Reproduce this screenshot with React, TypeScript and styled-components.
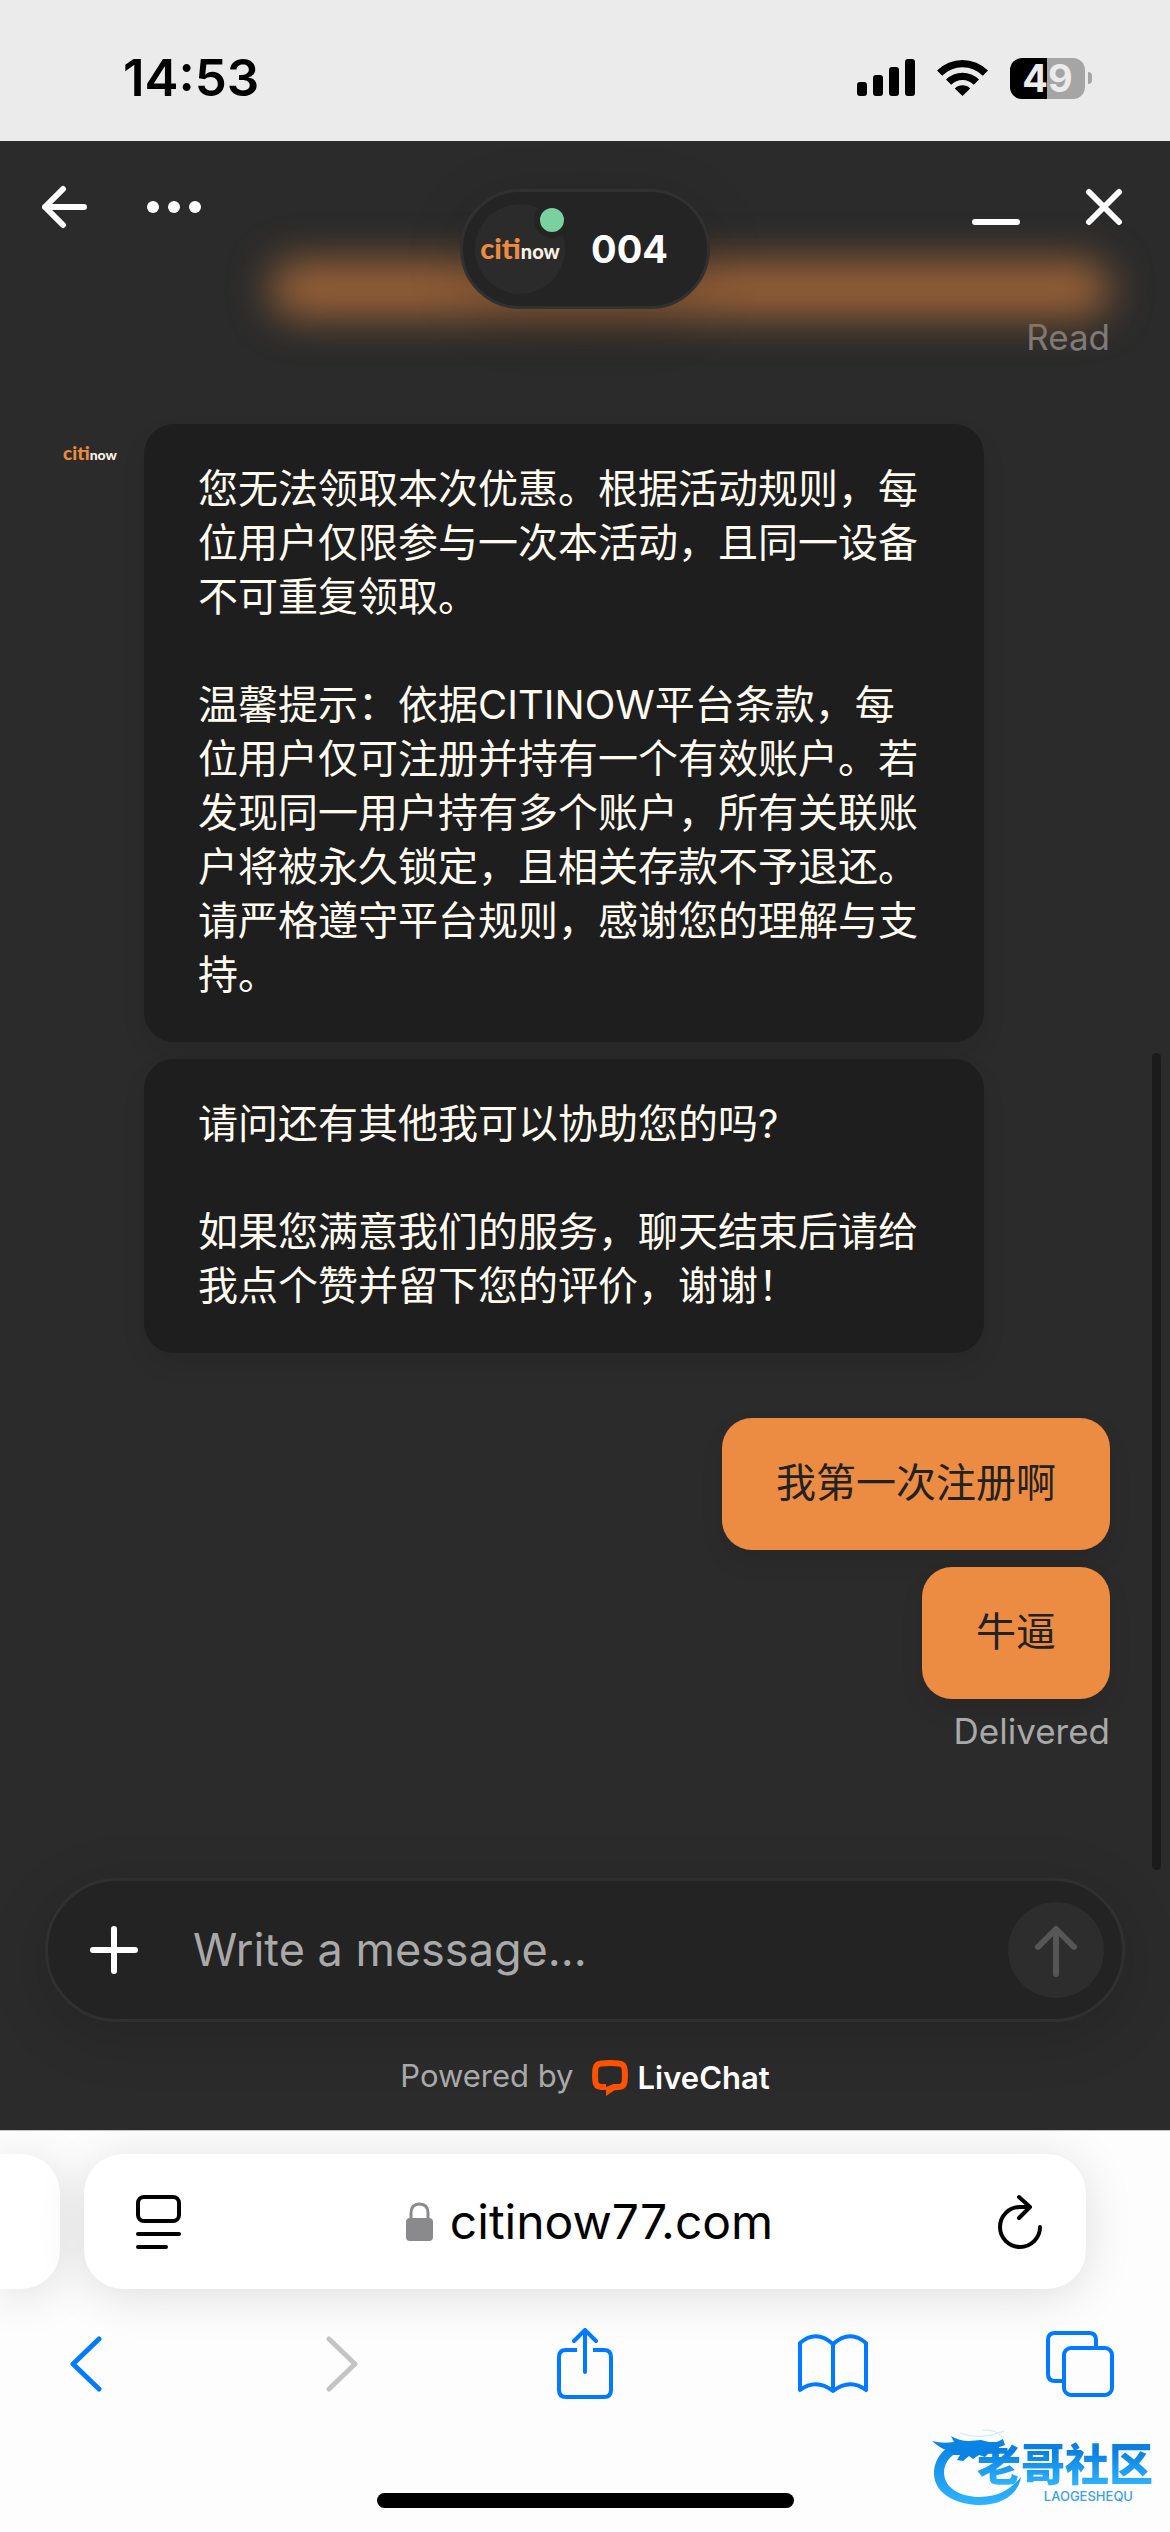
import React, { useState } from "react";
import styled, { createGlobalStyle } from "styled-components";

const latin = `Inter, "Noto Sans CJK SC", sans-serif`;

const GlobalStyle = createGlobalStyle`
  *, *::before, *::after { box-sizing: border-box; }
  body { margin: 0; background: #fdfdfd; font-family: ${latin}; }
  button, input { font: inherit; color: inherit; }
  button { border: 0; padding: 0; background: none; cursor: pointer; }
  svg { display: block; }
`;

const Page = styled.div`
  display: flex;
  flex-direction: column;
  min-height: 100vh;
`;

/* Status bar */

const StatusBar = styled.header`
  display: flex;
  justify-content: space-between;
  align-items: center;
  padding: 48px 78px 33px 123px;
  background: #ebebeb;
  color: #000;
`;

const Clock = styled.time`
  font-size: 51px;
  line-height: 60px;
  font-weight: 600;
`;

const StatusIcons = styled.div`
  display: flex;
  align-items: center;
  gap: 22px;
`;

const Battery = styled.div`
  display: flex;
  align-items: center;
  gap: 3px;
`;

const BatteryBody = styled.div`
  width: 75px;
  border-radius: 12px;
  background: linear-gradient(90deg, #000 49%, #a5a5a5 49%);
  color: #ebebeb;
  font-size: 38px;
  line-height: 41px;
  font-weight: 700;
  text-align: center;
`;

const BatteryCap = styled.div`
  width: 4px;
  height: 12px;
  border-radius: 0 6px 6px 0;
  background: #a5a5a5;
`;

/* Chat */

const Chat = styled.main`
  position: relative;
  flex: 1;
  display: flex;
  flex-direction: column;
  background: #2b2b2b;
`;

const ChatHeader = styled.div`
  position: relative;
  display: grid;
  grid-template-columns: 1fr auto 1fr;
  padding: 36px 36px 0;
  color: #fff;
`;

const HeaderActions = styled.div<{ $end?: boolean }>`
  position: relative;
  display: flex;
  align-items: center;
  align-self: start;
  gap: 48px;
  justify-content: ${(p) => (p.$end ? "flex-end" : "flex-start")};
`;

const IconButton = styled.button`
  display: grid;
  place-items: center;
  width: 60px;
  height: 60px;
`;

const ScrolledBubble = styled.div`
  position: absolute;
  top: 120px;
  left: 270px;
  right: 60px;
  height: 56px;
  border-radius: 28px;
  background: #9a6238;
  filter: blur(20px);
`;

const AgentPill = styled.button`
  position: relative;
  display: flex;
  align-items: center;
  gap: 26px;
  margin-top: 12px;
  padding: 12px 39px 12px 12px;
  border: 3px solid #313131;
  border-radius: 60px;
  background: #242424;
  box-shadow: 0 12px 60px rgba(0, 0, 0, 0.15);
`;

const Avatar = styled.span<{ $large?: boolean }>`
  position: relative;
  display: flex;
  align-items: center;
  justify-content: center;
  flex: none;
  width: ${(p) => (p.$large ? "90px" : "60px")};
  height: ${(p) => (p.$large ? "90px" : "60px")};
  border-radius: 50%;
  background: #2b2b2b;
`;

const BrandMark = styled.span<{ $large?: boolean }>`
  display: flex;
  align-items: baseline;
  font-family: Lato, sans-serif;
  font-weight: 900;
  line-height: 30px;
  color: #ee8b41;
  font-size: ${(p) => (p.$large ? "29px" : "19px")};

  span {
    color: #f8f1e4;
    font-size: ${(p) => (p.$large ? "20px" : "14px")};
  }
`;

const OnlineDot = styled.span`
  position: absolute;
  top: -2px;
  right: -5px;
  width: 36px;
  height: 36px;
  border: 6px solid #242424;
  border-radius: 50%;
  background: #7ad09f;
`;

const AgentName = styled.span`
  font-size: 38px;
  line-height: 48px;
  font-weight: 700;
`;

const Receipt = styled.p<{ $dim?: boolean }>`
  margin: 0;
  font-size: 35px;
  line-height: 40px;
  text-align: right;
  color: ${(p) => (p.$dim ? "#7d7d7d" : "#a9a9a9")};
`;

const Messages = styled.section`
  flex: 1;
  display: flex;
  flex-direction: column;
  padding: 8px 60px 0;
`;

const AgentTurn = styled.div`
  display: flex;
  align-items: flex-start;
  gap: 24px;
  margin-top: 67px;
`;

const Stack = styled.div<{ $mine?: boolean }>`
  display: flex;
  flex-direction: column;
  gap: 17px;
  align-items: ${(p) => (p.$mine ? "flex-end" : "stretch")};
  max-width: ${(p) => (p.$mine ? "none" : "840px")};
  margin: ${(p) => (p.$mine ? "65px 0 12px" : "0")};
`;

const Bubble = styled.p<{ $mine?: boolean }>`
  margin: 0;
  padding: 38px 54px 40px;
  border-radius: 30px;
  background: ${(p) => (p.$mine ? "#ec8b42" : "#1e1e1e")};
  color: ${(p) => (p.$mine ? "#222" : "#fffbf0")};
  font-size: 40px;
  line-height: 54px;
  white-space: pre-line;
  box-shadow: 0 12px 24px rgba(0, 0, 0, 0.08);
`;

const ScrollThumb = styled.div`
  position: absolute;
  top: 912px;
  bottom: 260px;
  right: 9px;
  width: 9px;
  border-radius: 5px;
  background: #1b1b1b;
`;

const Composer = styled.form`
  display: flex;
  align-items: center;
  gap: 49px;
  margin: 0 45px;
  padding: 21px 18px 21px 36px;
  border: 3px solid #303030;
  border-radius: 72px;
  background: #232323;
  color: #fff;
  box-shadow: 0 12px 60px rgba(0, 0, 0, 0.15);
`;

const MessageInput = styled.input`
  flex: 1;
  min-width: 0;
  padding: 0;
  border: 0;
  outline: 0;
  background: none;
  font-size: 45px;
  line-height: 60px;

  &::placeholder { color: #a9a9a9; opacity: 1; }
`;

const SendButton = styled.button`
  display: grid;
  place-items: center;
  width: 96px;
  height: 96px;
  border-radius: 50%;
  background: #2d2d2d;
  color: #565656;
`;

const Powered = styled.a`
  display: flex;
  align-items: center;
  justify-content: center;
  gap: 18px;
  padding: 34px 0 34px;
  color: #a9a9a9;
  font-size: 31px;
  line-height: 40px;
  text-decoration: none;
`;

const LiveChat = styled.strong`
  display: flex;
  align-items: center;
  gap: 10px;
  padding-top: 4px;
  color: #fff;
  font-size: 31px;
  line-height: 36px;
  font-weight: 600;
`;

/* Browser chrome */

const Browser = styled.footer`
  position: relative;
  overflow: hidden;
  border-top: 1px solid #c4c4c4;
  background: #fdfdfd;
`;

const TabStrip = styled.div`
  display: flex;
  gap: 24px;
  padding: 23px 84px 0 0;
`;

const TabCard = styled.div`
  display: flex;
  align-items: center;
  justify-content: space-between;
  flex: 1;
  height: 135px;
  padding: 0 36px 0 45px;
  border-radius: 39px;
  background: #fff;
  box-shadow: 0 6px 48px rgba(0, 0, 0, 0.13);
`;

const PreviousTab = styled(TabCard)`
  flex: none;
  width: 60px;
  padding: 0;
  border-radius: 0 39px 39px 0;
`;

const Address = styled.button`
  display: flex;
  align-items: center;
  gap: 17px;
  font-size: 48px;
  line-height: 60px;
  color: #000;
`;

const Toolbar = styled.nav`
  display: flex;
  align-items: center;
  justify-content: space-between;
  padding: 39px 54px 0;
  color: #007aff;
`;

const ToolButton = styled.button`
  display: grid;
  place-items: center;
  width: 72px;
  height: 72px;

  &:disabled { color: #c4c4c4; }
`;

const HomeIndicator = styled.div`
  width: 417px;
  height: 15px;
  margin: 93px auto 24px;
  border-radius: 8px;
  background: #000;
`;

const Watermark = styled.div`
  position: absolute;
  right: 17px;
  bottom: 26px;
  display: flex;
  align-items: flex-end;
`;

const WatermarkText = styled.div`
  position: relative;
  display: flex;
  flex-direction: column;
  align-items: flex-end;
  margin-left: -45px;
  padding-bottom: 3px;
  font-family: "Liberation Sans", "Noto Sans CJK SC", sans-serif;
  font-weight: 900;
  font-size: 44px;
  line-height: 48px;

  span {
    background: linear-gradient(#0a80e0 20%, #2fb4ff 90%);
    background-clip: text;
    color: transparent;
  }

  small {
    padding-right: 20px;
    font-family: Inter, sans-serif;
    font-size: 13px;
    line-height: 13px;
    font-weight: 500;
    color: #3aa0ee;
  }
`;

const line = {
  fill: "none",
  stroke: "currentColor",
  strokeLinecap: "round" as const,
  strokeLinejoin: "round" as const,
};

const Brand = ({ large }: { large?: boolean }) => (
  <BrandMark $large={large}>
    citi<span>now</span>
  </BrandMark>
);

const RULES = `您无法领取本次优惠。根据活动规则，每位用户仅限参与一次本活动，且同一设备不可重复领取。

温馨提示：依据CITINOW平台条款，每位用户仅可注册并持有一个有效账户。若发现同一用户持有多个账户，所有关联账户将被永久锁定，且相关存款不予退还。请严格遵守平台规则，感谢您的理解与支持。`;

const CLOSING = `请问还有其他我可以协助您的吗?

如果您满意我们的服务，聊天结束后请给我点个赞并留下您的评价，谢谢！`;

export default function App() {
  const [draft, setDraft] = useState("");

  return (
    <Page>
      <GlobalStyle />
      <StatusBar>
        <Clock>14:53</Clock>
        <StatusIcons>
          <svg width="58" height="38" viewBox="0 0 58 38">
            <rect x="0" y="23" width="10" height="14" rx="3" />
            <rect x="16" y="16" width="10" height="21" rx="3" />
            <rect x="32" y="8" width="10" height="29" rx="3" />
            <rect x="48" y="0" width="10" height="37" rx="3" />
          </svg>
          <svg width="51" height="38" viewBox="0 0 51 38">
            <path d="M0 11.500a36 36 0 0 1 51 0l-5.200 5.200a28.600 28.600 0 0 0-40.600 0z" />
            <path d="M9 20.500a23.300 23.300 0 0 1 33 0l-5.200 5.200a16 16 0 0 0-22.600 0z" />
            <path d="M17.800 29.400a10.900 10.900 0 0 1 15.400 0L25.500 37z" />
          </svg>
          <Battery>
            <BatteryBody>49</BatteryBody>
            <BatteryCap />
          </Battery>
        </StatusIcons>
      </StatusBar>

      <Chat>
        <ChatHeader>
          <ScrolledBubble />
          <HeaderActions>
            <IconButton aria-label="Back">
              <svg width="48" height="48" viewBox="0 0 48 48" {...line} strokeWidth="6">
                <path d="M42 24H3M21 6L3 24l18 18" />
              </svg>
            </IconButton>
            <IconButton aria-label="Options">
              <svg width="54" height="12" viewBox="0 0 54 12" fill="currentColor">
                <circle cx="6" cy="6" r="6" />
                <circle cx="27" cy="6" r="6" />
                <circle cx="48" cy="6" r="6" />
              </svg>
            </IconButton>
          </HeaderActions>
          <AgentPill>
            <Avatar $large>
              <Brand large />
              <OnlineDot />
            </Avatar>
            <AgentName>004</AgentName>
          </AgentPill>
          <HeaderActions $end>
            <IconButton aria-label="Minimize">
              <svg width="48" height="48" viewBox="0 0 48 48" {...line} strokeWidth="6">
                <path d="M3 39h42" />
              </svg>
            </IconButton>
            <IconButton aria-label="Close">
              <svg width="48" height="48" viewBox="0 0 48 48" {...line} strokeWidth="6">
                <path d="M9 9l30 30M39 9L9 39" />
              </svg>
            </IconButton>
          </HeaderActions>
        </ChatHeader>

        <Messages>
          <Receipt $dim>Read</Receipt>
          <AgentTurn>
            <Avatar>
              <Brand />
            </Avatar>
            <Stack>
              <Bubble>{RULES}</Bubble>
              <Bubble>{CLOSING}</Bubble>
            </Stack>
          </AgentTurn>
          <Stack $mine>
            <Bubble $mine>我第一次注册啊</Bubble>
            <Bubble $mine>牛逼</Bubble>
          </Stack>
          <Receipt>Delivered</Receipt>
        </Messages>
        <ScrollThumb />

        <Composer onSubmit={(e) => e.preventDefault()}>
          <IconButton type="button" aria-label="Add attachment">
            <svg width="48" height="48" viewBox="0 0 48 48" {...line} strokeWidth="6">
              <path d="M24 3v42M3 24h42" />
            </svg>
          </IconButton>
          <MessageInput
            aria-label="Message"
            placeholder="Write a message..."
            value={draft}
            onChange={(e) => setDraft(e.target.value)}
          />
          <SendButton aria-label="Send">
            <svg width="48" height="54" viewBox="0 0 48 54" {...line} strokeWidth="6">
              <path d="M24 51V6M6 24L24 6l18 18" />
            </svg>
          </SendButton>
        </Composer>

        <Powered href="#livechat">
          Powered by
          <LiveChat>
            <svg width="36" height="36" viewBox="0 0 36 36">
              <path
                fill="#ff5100"
                fillRule="evenodd"
                d="M9 .5Q18-.500 27 .5q8 .5 8.600 8.500.6 6 0 12.500-.6 8-8.600 8.500l-4.500.2L14 36v-6l-5-.1Q1 29.500.4 21.500q-.6-6.500 0-12.500Q1 1 9 .5zM9.500 6.500Q6.500 6.500 6.300 9.500q-.4 6 0 11.500.2 3 3.200 3H14v3l7.500-3h5q3 0 3.200-3 .4-5.500 0-11.500-.2-3-3.200-3Q18 5.700 9.500 6.500z"
              />
            </svg>
            LiveChat
          </LiveChat>
        </Powered>
      </Chat>

      <Browser>
        <TabStrip>
          <PreviousTab />
          <TabCard>
            <IconButton aria-label="Page menu">
              <svg width="46" height="54" viewBox="0 0 46 54" {...line} stroke="#000" strokeWidth="4">
                <rect x="2" y="2" width="41" height="24" rx="6" />
                <path d="M2 39h41M2 52h28" />
              </svg>
            </IconButton>
            <Address>
              <svg width="27" height="39" viewBox="0 0 27 39">
                <path d="M5 18v-7q0-9 8.500-9T22 11v7" fill="none" stroke="#8a8a8c" strokeWidth="3" />
                <rect y="16" width="27" height="23" rx="4" fill="#8a8a8c" />
              </svg>
              citinow77.com
            </Address>
            <IconButton aria-label="Reload">
              <svg width="46" height="56" viewBox="0 0 46 56" {...line} stroke="#000" strokeWidth="4">
                <path d="M43 33A20 20 0 1 1 23 13h10M22 3l11 10-11 11" />
              </svg>
            </IconButton>
          </TabCard>
        </TabStrip>
        <Toolbar aria-label="Browser">
          <ToolButton aria-label="Back">
            <svg width="40" height="56" viewBox="0 0 40 56" {...line} strokeWidth="5">
              <path d="M29 3L3 28l26 25" />
            </svg>
          </ToolButton>
          <ToolButton aria-label="Forward" disabled>
            <svg width="40" height="56" viewBox="0 0 40 56" {...line} strokeWidth="5">
              <path d="M11 3l26 25L11 53" />
            </svg>
          </ToolButton>
          <ToolButton aria-label="Share">
            <svg width="58" height="72" viewBox="0 1 58 72" {...line} strokeWidth="4">
              <path d="M29 45V3M18 14L29 3l11 11" />
              <path strokeLinecap="butt" d="M21 23h-11q-7 0-7 7v33q0 7 7 7h38q7 0 7-7V30q0-7-7-7H37" />
            </svg>
          </ToolButton>
          <ToolButton aria-label="Bookmarks">
            <svg width="72" height="60" viewBox="0 0 72 60" {...line} strokeWidth="4">
              <path d="M36 10Q19-5 3 9v47q16-12 33 1 17-13 33-1V9Q53-5 36 10zV57" />
            </svg>
          </ToolButton>
          <ToolButton aria-label="Tabs">
            <svg width="68" height="66" viewBox="0 0 68 66" {...line} strokeWidth="4">
              <rect x="18" y="17" width="48" height="47" rx="7" />
              <path strokeLinecap="butt" d="M50 17V9q0-7-7-7H9Q2 2 2 9v34q0 7 7 7h9" />
            </svg>
          </ToolButton>
        </Toolbar>
        <HomeIndicator />
        <Watermark>
          <svg width="90" height="78" viewBox="0 0 90 78">
            <defs>
              <linearGradient id="ring" x1="0" y1="0" x2="0" y2="1">
                <stop offset="0" stopColor="#0a80e0" />
                <stop offset="1" stopColor="#2fb4ff" />
              </linearGradient>
            </defs>
            <path
              fill="url(#ring)"
              d="M28 14C8 20 2 34 2 46c1 22 26 31 46 31 20 0 38-9 41-28C78 62 66 69 48 69 28 69 12 60 12 44c0-10 8-20 24-24z"
            />
            <path
              fill="#0a84e4"
              d="M0 13q10 3 22 1l-3-6q8 5 18 5l12-1 8 2 8 0 6-3 2 6-8 3 6 2-4 4-10-1-4 4-6-2-6 4-4-3-6 5-6-1 3-5-8 0-6-5Q8 20 0 13z"
            />
            <path d="M28 5q20 8 44-2M50 2q14-1 20 7" fill="none" stroke="#cfe6f8" strokeWidth="1" />
          </svg>
          <WatermarkText>
            <span>老哥社区</span>
            <small>LAOGESHEQU</small>
          </WatermarkText>
        </Watermark>
      </Browser>
    </Page>
  );
}
